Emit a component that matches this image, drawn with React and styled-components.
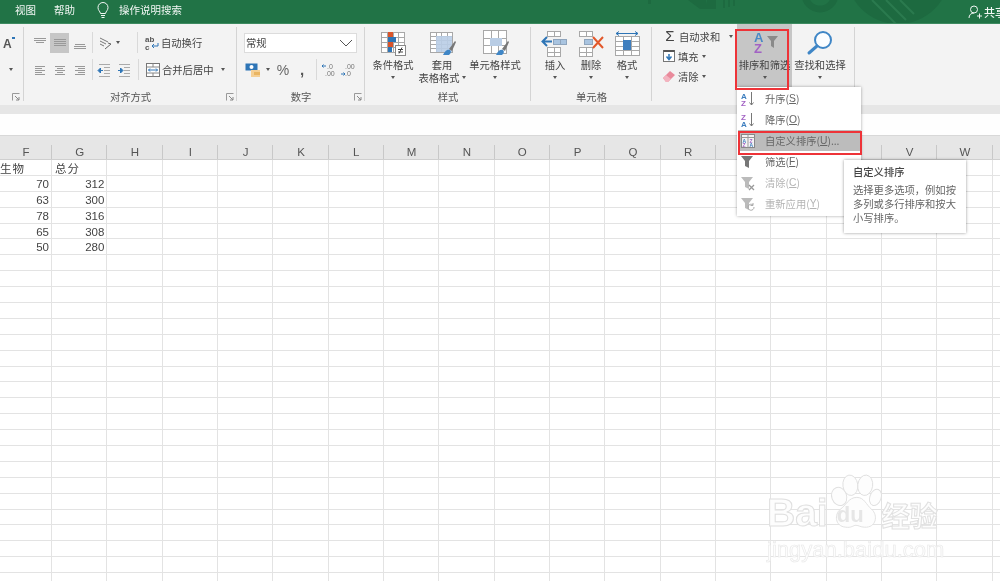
import styled, { createGlobalStyle } from "styled-components";

const CJK = `"Noto Sans CJK SC", "Liberation Sans", sans-serif`;
const LATIN = `"Liberation Sans", "Noto Sans CJK SC", sans-serif`;

const GlobalStyle = createGlobalStyle`
    html, body {
        margin: 0;
        padding: 0;
        background: white;
        overflow: hidden;
    }
`

const Page = styled.div`
    position: relative;
    width: 1000px;
    height: 581px;
    overflow: hidden;
    background: white;
    font-family: ${CJK};
    font-size: 10.3px;
    color: #444;
    filter: blur(0.35px);
`

/* title bar */
const TitleBar = styled.div`
    position: relative;
    height: 24px;
    box-sizing: border-box;
    padding: 0 0 3px 15px;
    display: flex;
    align-items: center;
    background: #217346;
    border-bottom: 1px solid #3d8a60;
    color: #f2f7f4;
    font-size: 10.5px;
    overflow: hidden;
`

const TitleDecor = styled.svg`
    position: absolute;
    left: 640px;
    top: 0;
`

const TitleTab = styled.div`
    position: relative;
    margin-right: ${p => p.$gap || 18}px;
    line-height: 20px;
`

const TitleIcon = styled.svg`
    position: relative;
    flex: none;
    margin-right: 8px;
`

const ShareBox = styled.div`
    position: relative;
    margin: 3px 0 0 auto;
    width: 32px;
    flex: none;
    display: flex;
    align-items: center;
    gap: 2px;
    white-space: nowrap;
    font-size: 11px;
    font-weight: 500;
`

const ShareIcon = styled.svg`
    flex: none;
`

/* ribbon */
const Ribbon = styled.div`
    display: flex;
    height: 81px;
    background: #f3f3f3;
`

const Group = styled.div`
    position: relative;
    flex: none;
    box-sizing: border-box;
    width: ${p => p.$width}px;
    display: flex;
    flex-direction: column;
    &::after {
        content: "";
        position: absolute;
        right: 0;
        top: 3px;
        bottom: 4px;
        width: 1px;
        background: #d4d4d4;
    }
`

const GroupBody = styled.div`
    height: 65px;
    box-sizing: border-box;
    display: flex;
    flex-direction: ${p => p.$column ? "column" : "row"};
    padding: ${p => p.$padding || "0"};
`

const GroupLabel = styled.div`
    position: relative;
    height: 16px;
    line-height: 16px;
    text-align: center;
    color: #555;
`

const Launcher = styled.svg`
    position: absolute;
    right: ${p => p.$right || 3}px;
    top: 4px;
`

const ToolRow = styled.div`
    height: 27px;
    display: flex;
    align-items: center;
`

const Tool = styled.div`
    flex: none;
    width: ${p => p.$width}px;
    height: ${p => p.$height || 20}px;
    margin-left: ${p => p.$left || 0}px;
    display: flex;
    align-items: center;
    justify-content: center;
    background: ${p => p.$active ? "#c6c6c6" : "transparent"};
`

const Divider = styled.div`
    flex: none;
    width: 1px;
    height: 21px;
    margin: 0 ${p => p.$right ?? 1}px 0 ${p => p.$left ?? 2}px;
    background: #d9d9d9;
`

const Caret = styled.span`
    flex: none;
    display: inline-block;
    width: 0;
    height: 0;
    margin-left: ${p => p.$left || 0}px;
    border-left: 2.5px solid transparent;
    border-right: 2.5px solid transparent;
    border-top: 3px solid #555;
`

const ToolText = styled.span`
    white-space: nowrap;
    margin-left: ${p => p.$left || 0}px;
`

const FontLetter = styled.span`
    font-family: ${LATIN};
    font-size: 12px;
    font-weight: 700;
    color: #555;
    margin: 3px 0 0 3px;
`

const FontGrow = styled.span`
    width: 3px;
    height: 2px;
    margin-bottom: 9px;
    background: #2e75b6;
`

const Percent = styled.span`
    font-family: ${LATIN};
    font-size: 14px;
    color: #666;
`

const Comma = styled.span`
    font-family: ${LATIN};
    font-size: 15px;
    font-weight: 700;
    line-height: 14px;
    color: #555;
`

const NumberSelect = styled.div`
    box-sizing: border-box;
    width: 113px;
    height: 20px;
    margin-left: 7px;
    padding: 0 3px 0 1px;
    display: flex;
    align-items: center;
    justify-content: space-between;
    background: white;
    border: 1px solid #dcdcdc;
`

const BigButton = styled.div`
    flex: none;
    width: ${p => p.$width}px;
    height: ${p => p.$height || 65}px;
    display: flex;
    flex-direction: column;
    align-items: center;
    padding-top: 6px;
    box-sizing: border-box;
    background: ${p => p.$active ? "#c6c6c6" : "transparent"};
    line-height: 13px;
    white-space: nowrap;
`

const BigIcon = styled.svg`
    flex: none;
    height: 28px;
`

const ButtonCaretRow = styled.div`
    height: 13px;
    display: flex;
    align-items: center;
    justify-content: center;
    gap: 2px;
`

const EditColumn = styled.div`
    width: 85px;
    flex: none;
    padding-top: 2px;
`

const EditRow = styled.div`
    height: 20px;
    display: flex;
    align-items: center;
`

const Sigma = styled.span`
    margin-left: 10px;
    width: 16px;
    font-family: ${LATIN};
    font-size: 15px;
    line-height: 20px;
    text-align: center;
    color: #444;
`

/* formula bar + sheet */
const Band = styled.div`
    height: 9px;
    background: #e6e6e6;
`

const FormulaBar = styled.div`
    height: 21px;
    background: #fefefe;
`

const HeaderTop = styled.div`
    height: 10px;
    background: #e6e6e6;
    border-top: 1px solid #d8d8d8;
    box-sizing: border-box;
`

const ColumnHeader = styled.div`
    display: grid;
    grid-template-columns: 52px repeat(18, 55.33px);
    height: 14px;
    background: #e6e6e6;
    border-bottom: 1px solid #cfcfcf;
    overflow: hidden;
`

const ColumnName = styled.div`
    border-right: 1px solid #c8c8c8;
    box-sizing: border-box;
    padding-left: 1px;
    font-family: ${LATIN};
    font-size: 11.5px;
    line-height: 15px;
    text-align: center;
    color: #555;
`

const Sheet = styled.div`
    display: grid;
    grid-template-columns: 52px repeat(18, 55.33px);
    grid-auto-rows: 15.9px;
`

const Cell = styled.div`
    box-sizing: border-box;
    border-right: 1px solid #e3e3e3;
    border-bottom: 1px solid #e3e3e3;
    padding: 0 2px 0 ${p => p.$left || 0}px;
    font-family: ${p => p.$cjk ? CJK : LATIN};
    font-size: 11.5px;
    line-height: 17px;
    text-align: ${p => p.$cjk ? "left" : "right"};
    letter-spacing: ${p => p.$cjk ? 1 : 0}px;
    color: #444;
    white-space: nowrap;
`

/* overlays */
const RedBox = styled.div`
    position: absolute;
    left: ${p => p.$x}px;
    top: ${p => p.$y}px;
    width: ${p => p.$w}px;
    height: ${p => p.$h}px;
    box-sizing: border-box;
    border: 2.5px solid #ee3338;
    pointer-events: none;
`

const Menu = styled.div`
    position: absolute;
    left: 737px;
    top: 87px;
    width: 124px;
    height: 129px;
    box-sizing: border-box;
    padding: 1px 0 1px 1px;
    background: white;
    box-shadow: 0 0 3px rgba(0,0,0,0.35);
`

const MenuItem = styled.div`
    height: 21px;
    display: flex;
    align-items: center;
    background: ${p => p.$selected ? "#bcbcbc" : "transparent"};
    color: ${p => p.$disabled ? "#b4b4b4" : "#666"};
    white-space: nowrap;
`

const MenuIcon = styled.svg`
    flex: none;
    width: 16px;
    height: 16px;
    margin: 0 9px 0 2px;
`

const Key = styled.span`
    text-decoration: underline;
    font-family: ${LATIN};
`

const Tooltip = styled.div`
    position: absolute;
    left: 844px;
    top: 160px;
    width: 122px;
    height: 73px;
    box-sizing: border-box;
    padding: 5px 0 0 9px;
    background: white;
    box-shadow: 0 0 3px rgba(0,0,0,0.4);
    line-height: 14px;
    color: #666;
`

const TooltipTitle = styled.div`
    height: 16px;
    margin-bottom: 2px;
    font-weight: 500;
    color: #444;
`

const Watermark = styled.div`
    position: absolute;
    left: 767px;
    top: 473px;
    width: 185px;
`

const WatermarkLogo = styled.div`
    display: flex;
    align-items: flex-end;
    height: 59px;
`

const WatermarkWord = styled.span`
    font-family: ${p => p.$cjk ? CJK : LATIN};
    font-size: ${p => p.$cjk ? 28 : 39}px;
    font-weight: 700;
    line-height: ${p => p.$cjk ? 34 : 38}px;
    color: #fdfdfd;
    -webkit-text-stroke: 1px #e0e0e0;
`

const Paw = styled.div`
    position: relative;
    flex: none;
    width: 54px;
    height: 59px;
`

const PawWord = styled.span`
    position: absolute;
    left: 9px;
    bottom: 5px;
    font-family: ${LATIN};
    font-size: 22px;
    font-weight: 700;
    line-height: 24px;
    color: #e6e6e6;
`

const WatermarkUrl = styled.div`
    margin-top: 6px;
    font-family: ${LATIN};
    font-size: 22px;
    line-height: 24px;
    color: #fdfdfd;
    -webkit-text-stroke: 0.6px #e8e8e8;
    white-space: nowrap;
`

const Lines = ({ rows, size = 16 }) => (
    <svg width={size} height={size} viewBox="0 0 16 16">
        {rows.map(([x1, x2, y, color], i) => (
            <line key={i} x1={x1} x2={x2} y1={y + .5} y2={y + .5} stroke={color || "#999"} strokeWidth="1" />
        ))}
    </svg>
);

const LauncherIcon = ({ right }) => (
    <Launcher $right={right} width="8" height="8" viewBox="0 0 8 8">
        <path d="M.5 7.500V.5h7" fill="none" stroke="#999" />
        <path d="M3 3l4 4M7 4v3H4" fill="none" stroke="#888" />
    </Launcher>
);

const alignTop = [[2, 14, 3], [2, 14, 5], [4, 12, 7]];
const alignMid = [[2, 14, 4], [2, 14, 6], [2, 14, 8], [2, 14, 10]];
const alignBot = [[3, 13, 9], [2, 14, 11], [2, 14, 13]];
const alignLeft = [[3, 13, 4], [3, 10, 6], [3, 13, 8], [3, 10, 10], [3, 13, 12]];
const alignCenter = [[3, 13, 4], [5, 11, 6], [3, 13, 8], [5, 11, 10], [3, 13, 12]];
const alignRight = [[3, 13, 4], [6, 13, 6], [3, 13, 8], [6, 13, 10], [3, 13, 12]];

const OrientIcon = () => (
    <svg width="16" height="16" viewBox="0 0 16 16">
        <path d="M3 3l8 4M3 6l6 3M3 9l4 2" stroke="#777" fill="none" />
        <path d="M8 14l6-5-3-1" stroke="#666" fill="none" />
    </svg>
);

const IndentIcon = ({ flip }) => (
    <svg width="16" height="16" viewBox="0 0 16 16">
        <path d="M3 2.500h11M8 5.500h6M8 8.500h6M8 11.500h6M3 14.500h11" stroke="#aaa" />
        <path d={flip ? "M2 8.500h4M4.500 6L7 8.500 4.500 11z" : "M7 8.500H3M4.500 6L2 8.500 4.500 11z"} stroke="#2e75b6" fill="#2e75b6" />
    </svg>
);

const WrapIcon = () => (
    <svg width="16" height="16" viewBox="0 0 16 16">
        <text x="1" y="7" fontFamily="Liberation Sans" fontSize="8" fontWeight="700" fill="#555">ab</text>
        <text x="1" y="15" fontFamily="Liberation Sans" fontSize="8" fontWeight="700" fill="#555">c</text>
        <path d="M14 8v3H8M10 9l-2 2 2 2" stroke="#2e75b6" fill="none" />
    </svg>
);

const MergeIcon = () => (
    <svg width="16" height="16" viewBox="0 0 16 16">
        <rect x="1.500" y="1.500" width="13" height="13" fill="white" stroke="#777" />
        <path d="M1.500 5h13M1.500 11h13M8 1.500V5M8 11v3.500" stroke="#888" />
        <path d="M3.500 8h9M5 6.500L3.500 8 5 9.500M11 6.500L12.500 8 11 9.500" stroke="#2e75b6" fill="none" />
    </svg>
);

const CurrencyIcon = () => (
    <svg width="16" height="16" viewBox="0 0 16 16">
        <rect x="0.500" y="1.500" width="12" height="7" fill="#2e75b6" />
        <circle cx="6.500" cy="5" r="2" fill="white" />
        <rect x="6" y="8" width="9" height="7" fill="#f5cf94" />
        <rect x="9" y="10" width="6" height="3" fill="#eab562" />
    </svg>
);

const DecimalIcon = ({ more }) => (
    <svg width="18" height="16" viewBox="0 0 18 16">
        <text x={more ? 7 : 5} y="6.500" fontFamily="Liberation Sans" fontSize="7" fill="#777">{more ? ".0" : ".00"}</text>
        <text x="5" y="14" fontFamily="Liberation Sans" fontSize="7" fill="#777">{more ? ".00" : ".0"}</text>
        <path d={more ? "M6 4H2M3.500 2.500L2 4l1.500 1.500" : "M1 12h4M3.500 10.500L5 12l-1.500 1.500"} stroke="#2e75b6" fill="none" />
    </svg>
);

const GridLines = ({ x, y, w, h, cols, rows, fill = "white", line = "#a8a8a8" }) => (
    <g>
        <rect x={x + .5} y={y + .5} width={w} height={h} fill={fill} stroke={line} />
        {Array.from({ length: cols - 1 }, (_, i) => {
            const px = Math.round(x + (w / cols) * (i + 1)) + .5;
            return <line key={"c" + i} x1={px} x2={px} y1={y} y2={y + h} stroke={line} />;
        })}
        {Array.from({ length: rows - 1 }, (_, i) => {
            const py = Math.round(y + (h / rows) * (i + 1)) + .5;
            return <line key={"r" + i} y1={py} y2={py} x1={x} x2={x + w} stroke={line} />;
        })}
    </g>
);

const Brush = () => (
    <g>
        <path d="M15 25c2-5 5-6 7-5 2 2 0 4-1 5z" fill="#3f86c6" />
        <path d="M21 19l6-8 1 1-4 9z" fill="#777" />
    </g>
);

const CondFormatIcon = () => (
    <BigIcon width="28" height="28" viewBox="0 0 28 28">
        <GridLines x={2} y={2} w={23} h={20} cols={4} rows={4} />
        <rect x="9" y="2" width="5" height="5" fill="#d9542b" />
        <rect x="9" y="7" width="8" height="5" fill="#2e75b6" />
        <rect x="9" y="12" width="5" height="5" fill="#d9542b" />
        <rect x="9" y="17" width="4" height="5" fill="#2e75b6" />
        <rect x="16.500" y="15.500" width="10" height="10" fill="white" stroke="#888" />
        <path d="M19 19.500h5M19 22h5M23 17.500l-3 6" stroke="#444" fill="none" />
    </BigIcon>
);

const TableStyleIcon = () => (
    <BigIcon width="28" height="28" viewBox="0 0 28 28">
        <GridLines x={2} y={2} w={22} h={20} cols={4} rows={5} />
        <rect x="8" y="6" width="16" height="16" fill="#b9cde5" opacity=".9" />
        <Brush />
    </BigIcon>
);

const CellStyleIcon = () => (
    <BigIcon width="28" height="28" viewBox="0 0 28 28">
        <GridLines x={2} y={0} w={23} h={23} cols={3} rows={3} />
        <rect x="9" y="8" width="12" height="8" fill="#b9cde5" />
        <Brush />
    </BigIcon>
);

const InsertIcon = () => (
    <BigIcon width="28" height="28" viewBox="0 0 28 28">
        <GridLines x={6} y={1} w={13} h={5} cols={2} rows={1} />
        <GridLines x={6} y={17} w={13} h={9} cols={2} rows={2} />
        <GridLines x={12} y={9} w={13} h={5} cols={2} rows={1} fill="#a9c4e0" line="#8fa5bd" />
        <path d="M11 11.500H2M6 7l-4.500 4.500L6 16" stroke="#2e75b6" strokeWidth="2" fill="none" />
    </BigIcon>
);

const DeleteIcon = () => (
    <BigIcon width="28" height="28" viewBox="0 0 28 28">
        <GridLines x={2} y={1} w={13} h={5} cols={2} rows={1} />
        <GridLines x={2} y={17} w={13} h={9} cols={2} rows={2} />
        <rect x="7.500" y="9.500" width="8" height="5" fill="#a9c4e0" stroke="#8fa5bd" />
        <path d="M16 7l10 11M26 7L16 18" stroke="#e2582b" strokeWidth="2" fill="none" />
    </BigIcon>
);

const FormatIcon = () => (
    <BigIcon width="28" height="28" viewBox="0 0 28 28">
        <path d="M3 3.500h22M6 1.500l-3 2 3 2M22 1.500l3 2-3 2" stroke="#2e75b6" fill="none" />
        <GridLines x={2} y={6} w={24} h={19} cols={3} rows={4} />
        <rect x="10" y="10" width="8" height="10" fill="#3f7fbf" />
    </BigIcon>
);

const FillIcon = () => (
    <svg width="14" height="14" viewBox="0 0 14 14">
        <rect x="1.500" y="1.500" width="11" height="11" fill="white" stroke="#777" />
        <path d="M1.500 2h11" stroke="#555" strokeWidth="2" />
        <path d="M7 5v5M4.500 7.500L7 10.500l2.500-3" stroke="#2e75b6" strokeWidth="1.500" fill="none" />
    </svg>
);

const EraserIcon = () => (
    <svg width="14" height="14" viewBox="0 0 14 14">
        <path d="M1 9l7-7 5 4-7 7H4z" fill="#e98a9b" />
        <path d="M1 9l3-3 5 4-3 3H4z" fill="#f3b3bf" />
    </svg>
);

const SortBigIcon = () => (
    <BigIcon width="38" height="28" viewBox="0 0 38 28">
        <text x="8" y="12" fontFamily="Liberation Sans" fontSize="13" fontWeight="700" fill="#4a8ac6">A</text>
        <text x="8" y="23" fontFamily="Liberation Sans" fontSize="13" fontWeight="700" fill="#a262c4">Z</text>
        <path d="M21 6h11l-4 5v7l-3-2v-5z" fill="#8a8a8a" />
    </BigIcon>
);

const SearchIcon = () => (
    <BigIcon width="28" height="28" viewBox="0 0 28 28">
        <circle cx="17" cy="10" r="8" fill="#fbfdff" stroke="#3f86c6" strokeWidth="2" />
        <path d="M11 16L3 23" stroke="#3f86c6" strokeWidth="3" strokeLinecap="round" />
    </BigIcon>
);

const SortMenuIcon = ({ top, bottom, topColor, bottomColor }) => (
    <MenuIcon viewBox="0 0 16 16">
        <text x="1" y="7.500" fontFamily="Liberation Sans" fontSize="8" fontWeight="700" fill={topColor}>{top}</text>
        <text x="1" y="15" fontFamily="Liberation Sans" fontSize="8" fontWeight="700" fill={bottomColor}>{bottom}</text>
        <path d="M11.500 1v13M9.500 11.500l2 2.500 2-2.500" stroke="#777" fill="none" />
    </MenuIcon>
);

const CustomSortIcon = () => (
    <MenuIcon viewBox="0 0 16 16">
        <rect x="1.500" y="1.500" width="13" height="13" fill="#f4f4f4" stroke="#888" />
        <path d="M1.500 4.500h13M8 1.500v13" stroke="#999" />
        <text x="2.500" y="9.500" fontFamily="Liberation Sans" fontSize="5" fontWeight="700" fill="#3f7fbf">A</text>
        <text x="2.500" y="14" fontFamily="Liberation Sans" fontSize="5" fontWeight="700" fill="#a262c4">Z</text>
        <text x="9.500" y="9.500" fontFamily="Liberation Sans" fontSize="5" fontWeight="700" fill="#a262c4">Z</text>
        <text x="9.500" y="14" fontFamily="Liberation Sans" fontSize="5" fontWeight="700" fill="#3f7fbf">A</text>
    </MenuIcon>
);

const FunnelIcon = ({ color, badge }) => (
    <MenuIcon viewBox="0 0 16 16">
        <path d="M1 2h12L9 7v7l-4-2V7z" fill={color} />
        {badge === "x" && <path d="M9 10l5 5M14 10l-5 5" stroke="#999" strokeWidth="1.300" />}
        {badge === "redo" && <path d="M14 11a3 3 0 1 1-1-2M13 7v2.500h-2.500" stroke="#aaa" fill="none" />}
    </MenuIcon>
);

const COLUMNS = "FGHIJKLMNOPQRSTUVWX".split("");
const SCORES = [[70, 312], [63, 300], [78, 316], [65, 308], [50, 280]];
const ROW_COUNT = 27;

const cellValue = (row, col) => {
    if (row === 0 && col === 0) return "生物";
    if (row === 0 && col === 1) return "总分";
    const scores = SCORES[row - 1];
    return scores && col < 2 ? scores[col] : "";
};

const App = () => {
    return (
        <Page>
            <GlobalStyle />
            <TitleBar>
                <TitleDecor width="360" height="24" viewBox="0 0 360 24">
                    <path d="M8 0h3v4H8zM48 0h18l2 9h-8zM67 0h9v9h-9zM83 0h2v8h-2zM88 0h2v7h-2zM93 0h2v6h-2z" fill="#1d6a40" />
                    <circle cx="180" cy="-6" r="15" fill="none" stroke="#1d6a40" strokeWidth="7" />
                    <circle cx="258" cy="-28" r="52" fill="#1d6a40" />
                    <path d="M232 0l24 24M246 0l20 20M260 0l14 14" stroke="#2a7a4e" strokeWidth="2" />
                </TitleDecor>
                <TitleTab>视图</TitleTab>
                <TitleTab $gap={20}>帮助</TitleTab>
                <TitleIcon width="16" height="18" viewBox="0 0 16 18">
                    <path d="M5.500 12.500C5 10 3 9.500 3 6.500a5 5 0 0 1 10 0c0 3-2 3.500-2.500 6z" fill="none" stroke="#f2f7f4" />
                    <path d="M6 14.500h4M6.500 16.500h3" stroke="#f2f7f4" />
                </TitleIcon>
                <TitleTab>操作说明搜索</TitleTab>
                <ShareBox>
                    <ShareIcon width="14" height="14" viewBox="0 0 14 14">
                        <circle cx="6" cy="4.500" r="3.500" fill="none" stroke="#f2f7f4" />
                        <path d="M1 13c0-3 2-5 5-5M9 11h5M11.500 8.500v5" fill="none" stroke="#f2f7f4" />
                    </ShareIcon>
                    共享
                </ShareBox>
            </TitleBar>

            <Ribbon>
                <Group $width={24}>
                    <GroupBody $column $padding="5px 0 0 0">
                        <ToolRow>
                            <FontLetter>A</FontLetter>
                            <FontGrow />
                        </ToolRow>
                        <ToolRow>
                            <Caret $left={9} />
                        </ToolRow>
                    </GroupBody>
                    <GroupLabel><LauncherIcon right={4} /></GroupLabel>
                </Group>

                <Group $width={213}>
                    <GroupBody $column $padding="5px 0 0 6px">
                        <ToolRow>
                            <Tool $width={20}><Lines rows={alignTop} /></Tool>
                            <Tool $width={19} $active><Lines rows={alignMid} /></Tool>
                            <Tool $width={20} $left={1}><Lines rows={alignBot} /></Tool>
                            <Divider />
                            <Tool $width={22}><OrientIcon /></Tool>
                            <Caret $left={0} />
                            <Divider $left={17} $right={0} />
                            <Tool $width={18} $left={5}><WrapIcon /></Tool>
                            <ToolText>自动换行</ToolText>
                        </ToolRow>
                        <ToolRow>
                            <Tool $width={20}><Lines rows={alignLeft} /></Tool>
                            <Tool $width={20}><Lines rows={alignCenter} /></Tool>
                            <Tool $width={20}><Lines rows={alignRight} /></Tool>
                            <Divider />
                            <Tool $width={20}><IndentIcon /></Tool>
                            <Tool $width={20}><IndentIcon flip /></Tool>
                            <Divider $left={4} $right={0} />
                            <Tool $width={18} $left={5}><MergeIcon /></Tool>
                            <ToolText>合并后居中</ToolText>
                            <Caret $left={8} />
                        </ToolRow>
                    </GroupBody>
                    <GroupLabel>对齐方式<LauncherIcon right={3} /></GroupLabel>
                </Group>

                <Group $width={128}>
                    <GroupBody $column $padding="5px 0 0 0">
                        <ToolRow>
                            <NumberSelect>
                                常规
                                <svg width="14" height="8" viewBox="0 0 14 8">
                                    <path d="M1 1l6 6 6-6" fill="none" stroke="#555" />
                                </svg>
                            </NumberSelect>
                        </ToolRow>
                        <ToolRow>
                            <Tool $width={16} $left={8}><CurrencyIcon /></Tool>
                            <Caret $left={5} />
                            <Tool $width={20} $left={3}><Percent>%</Percent></Tool>
                            <Tool $width={18}><Comma>,</Comma></Tool>
                            <Divider $left={5} $right={2} />
                            <Tool $width={20}><DecimalIcon more /></Tool>
                            <Tool $width={20}><DecimalIcon /></Tool>
                        </ToolRow>
                    </GroupBody>
                    <GroupLabel>数字<LauncherIcon right={3} /></GroupLabel>
                </Group>

                <Group $width={166}>
                    <GroupBody $padding="0 0 0 4px">
                        <BigButton $width={48}>
                            <CondFormatIcon />
                            条件格式
                            <ButtonCaretRow><Caret /></ButtonCaretRow>
                        </BigButton>
                        <BigButton $width={50}>
                            <TableStyleIcon />
                            套用
                            <ButtonCaretRow>表格格式<Caret /></ButtonCaretRow>
                        </BigButton>
                        <BigButton $width={56}>
                            <CellStyleIcon />
                            单元格样式
                            <ButtonCaretRow><Caret /></ButtonCaretRow>
                        </BigButton>
                    </GroupBody>
                    <GroupLabel>样式</GroupLabel>
                </Group>

                <Group $width={121}>
                    <GroupBody $padding="0 0 0 6px">
                        <BigButton $width={36}>
                            <InsertIcon />
                            插入
                            <ButtonCaretRow><Caret /></ButtonCaretRow>
                        </BigButton>
                        <BigButton $width={36}>
                            <DeleteIcon />
                            删除
                            <ButtonCaretRow><Caret /></ButtonCaretRow>
                        </BigButton>
                        <BigButton $width={36}>
                            <FormatIcon />
                            格式
                            <ButtonCaretRow><Caret /></ButtonCaretRow>
                        </BigButton>
                    </GroupBody>
                    <GroupLabel>单元格</GroupLabel>
                </Group>

                <Group $width={203}>
                    <GroupBody>
                        <EditColumn>
                            <EditRow>
                                <Sigma>Σ</Sigma>
                                <ToolText $left={1}>自动求和</ToolText>
                                <Caret $left={9} />
                            </EditRow>
                            <EditRow>
                                <Tool $width={14} $left={10}><FillIcon /></Tool>
                                <ToolText $left={2}>填充</ToolText>
                                <Caret $left={3} />
                            </EditRow>
                            <EditRow>
                                <Tool $width={14} $left={10}><EraserIcon /></Tool>
                                <ToolText $left={2}>清除</ToolText>
                                <Caret $left={3} />
                            </EditRow>
                        </EditColumn>
                        <BigButton $width={55} $active $height={63}>
                            <SortBigIcon />
                            排序和筛选
                            <ButtonCaretRow><Caret /></ButtonCaretRow>
                        </BigButton>
                        <BigButton $width={56}>
                            <SearchIcon />
                            查找和选择
                            <ButtonCaretRow><Caret /></ButtonCaretRow>
                        </BigButton>
                    </GroupBody>
                </Group>
            </Ribbon>

            <Band />
            <FormulaBar />
            <HeaderTop />
            <ColumnHeader>
                {COLUMNS.map(name => <ColumnName key={name}>{name}</ColumnName>)}
            </ColumnHeader>
            <Sheet>
                {Array.from({ length: ROW_COUNT }, (_, row) =>
                    COLUMNS.map((name, col) => {
                        const value = cellValue(row, col);
                        const isText = typeof value === "string";
                        return (
                            <Cell key={name + row} $cjk={isText} $left={isText && col === 1 ? 3 : 0}>
                                {value}
                            </Cell>
                        );
                    })
                )}
            </Sheet>

            <Menu>
                <MenuItem>
                    <SortMenuIcon top="A" bottom="Z" topColor="#3f7fbf" bottomColor="#a262c4" />
                    升序(<Key>S</Key>)
                </MenuItem>
                <MenuItem>
                    <SortMenuIcon top="Z" bottom="A" topColor="#a262c4" bottomColor="#3f7fbf" />
                    降序(<Key>O</Key>)
                </MenuItem>
                <MenuItem $selected>
                    <CustomSortIcon />
                    自定义排序(<Key>U</Key>)...
                </MenuItem>
                <MenuItem>
                    <FunnelIcon color="#777" />
                    筛选(<Key>F</Key>)
                </MenuItem>
                <MenuItem $disabled>
                    <FunnelIcon color="#bbb" badge="x" />
                    清除(<Key>C</Key>)
                </MenuItem>
                <MenuItem $disabled>
                    <FunnelIcon color="#bbb" badge="redo" />
                    重新应用(<Key>Y</Key>)
                </MenuItem>
            </Menu>

            <Tooltip>
                <TooltipTitle>自定义排序</TooltipTitle>
                选择更多选项，例如按<br />
                多列或多行排序和按大<br />
                小写排序。
            </Tooltip>

            <RedBox $x={735} $y={29} $w={54} $h={61} />
            <RedBox $x={738} $y={131} $w={124} $h={24} />

            <Watermark>
                <WatermarkLogo>
                    <WatermarkWord>Bai</WatermarkWord>
                    <Paw>
                        <svg width="54" height="59" viewBox="0 0 58 59">
                            <g fill="#fdfdfd" stroke="#e0e0e0">
                                <ellipse cx="12" cy="23" rx="8" ry="10" transform="rotate(-20 12 23)" />
                                <ellipse cx="24" cy="11" rx="8" ry="11" transform="rotate(-8 24 11)" />
                                <ellipse cx="40" cy="11" rx="8" ry="11" transform="rotate(8 40 11)" />
                                <ellipse cx="51" cy="24" rx="6" ry="9" transform="rotate(20 51 24)" />
                                <path d="M31 24c8 0 10 8 16 13 7 6 5 20-8 19-4 0-6-2-9-2s-5 3-11 2C7 55 7 42 13 37c6-4 9-13 18-13z" />
                            </g>
                        </svg>
                        <PawWord>du</PawWord>
                    </Paw>
                    <WatermarkWord $cjk>经验</WatermarkWord>
                </WatermarkLogo>
                <WatermarkUrl>jingyan.baidu.com</WatermarkUrl>
            </Watermark>
        </Page>
    );
}

export default App;
